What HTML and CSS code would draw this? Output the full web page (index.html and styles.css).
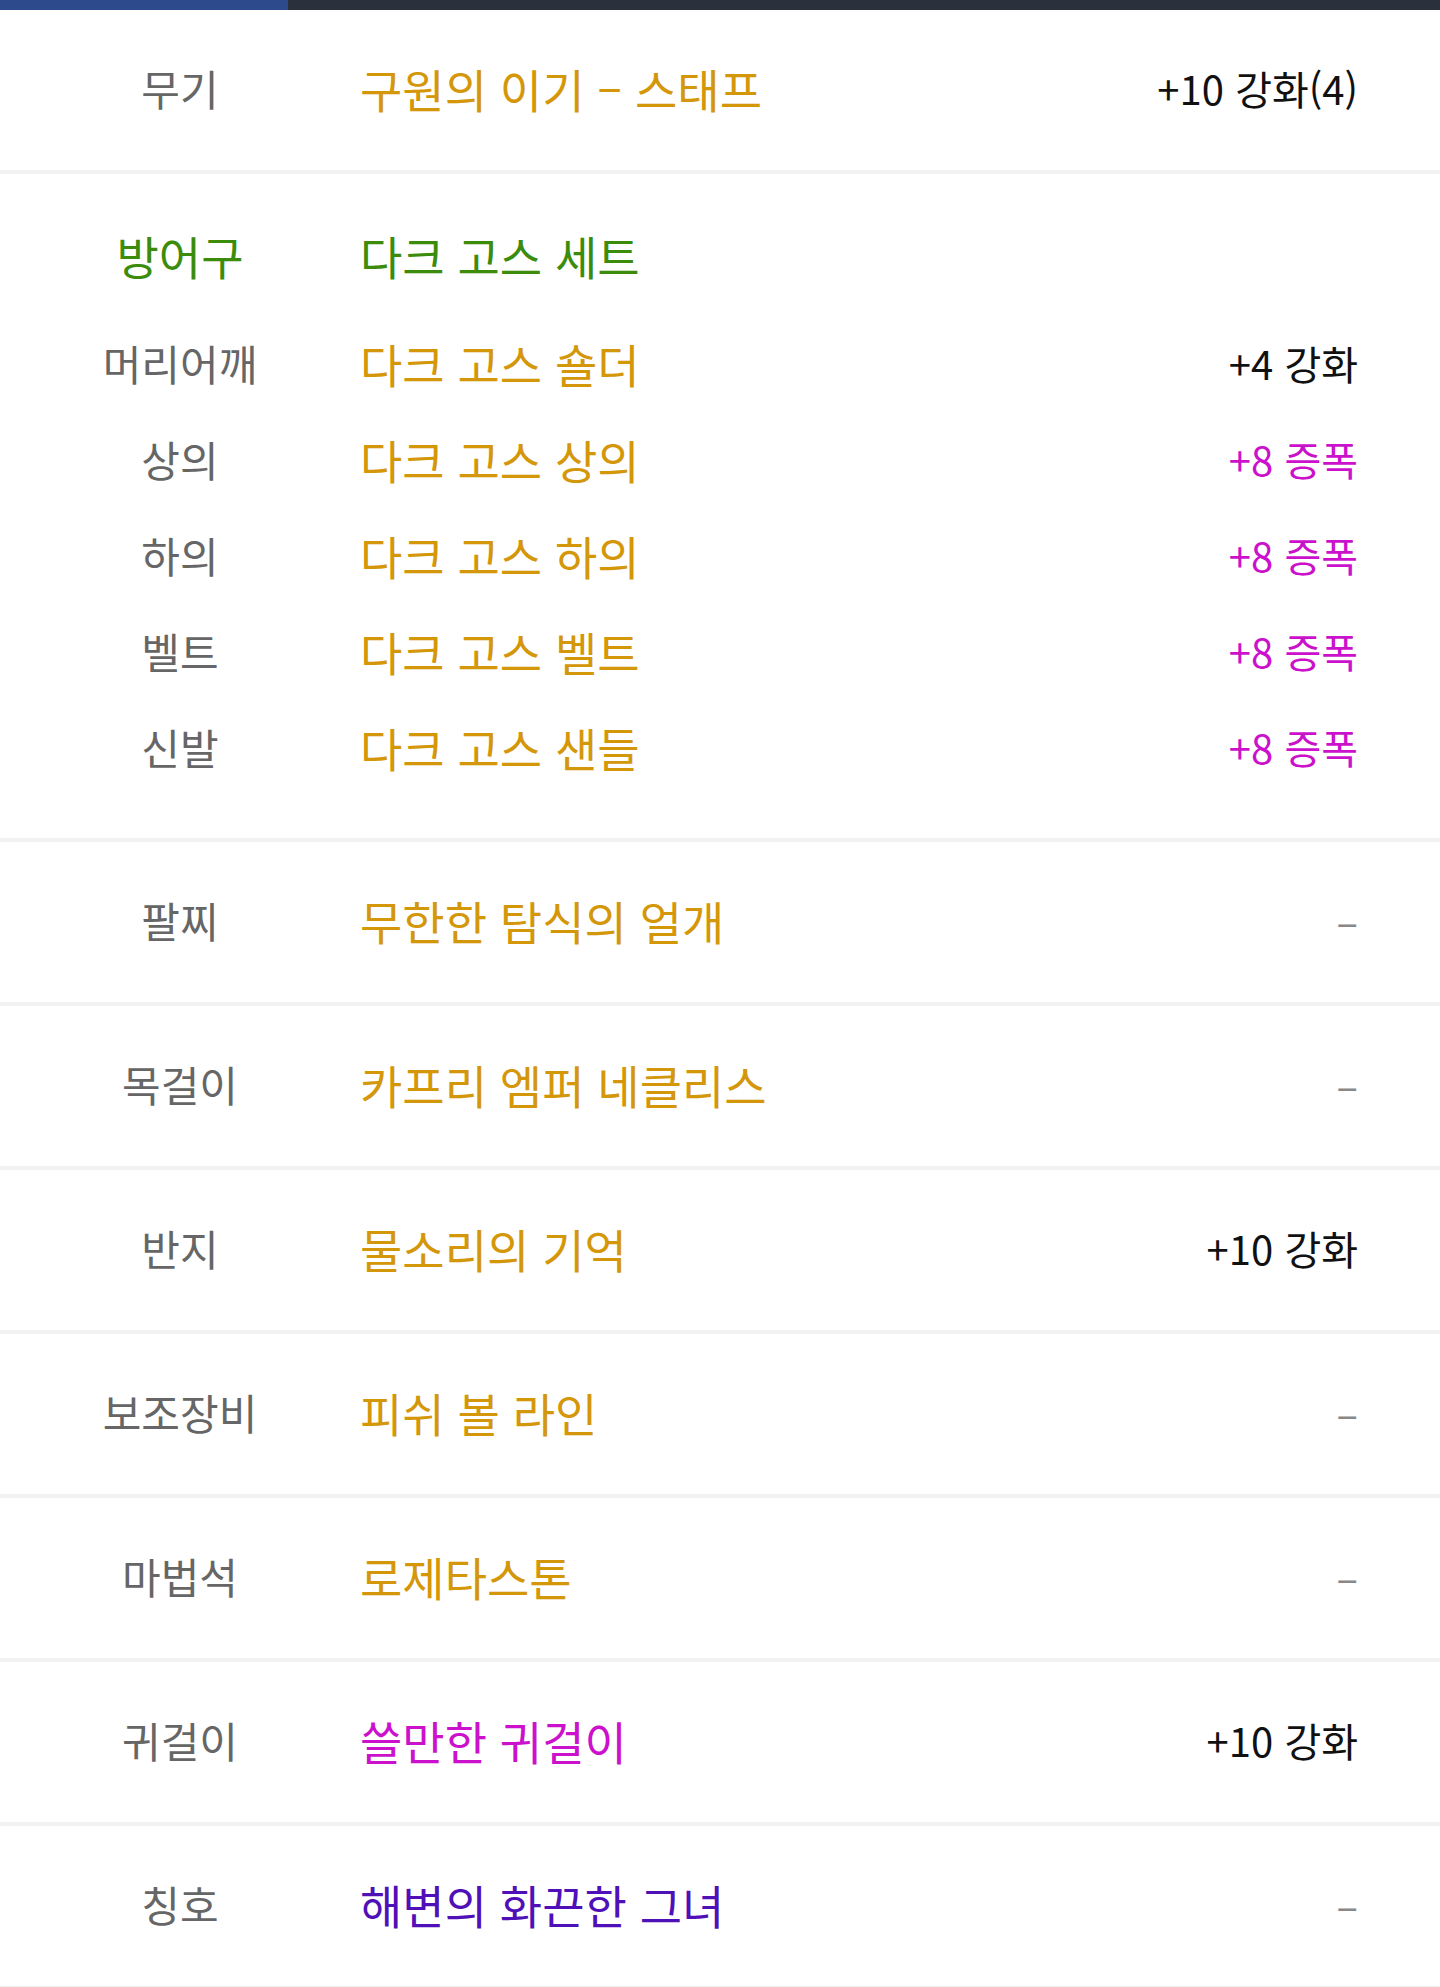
FILE: index.html
```html
<!DOCTYPE html>
<html lang="ko">
<head>
    <meta charset="UTF-8">
    <meta name="viewport" content="width=device-width, initial-scale=1.0">
    <title>장비</title>
    <link rel="stylesheet" href="styles.css">
</head>
<body>

    <div class="tabbar">
        <div class="tab-active"></div>
    </div>

    <ul class="equip-list">
        <li class="equip-row">
            <span class="slot">무기</span>
            <span class="item">구원의 이기 – 스태프</span>
            <span class="value">+10 강화(4)</span>
        </li>

        <li class="equip-group">
            <div class="group-head">
                <span class="slot">방어구</span>
                <span class="item">다크 고스 세트</span>
            </div>
            <div class="group-line">
                <span class="slot">머리어깨</span>
                <span class="item">다크 고스 숄더</span>
                <span class="value">+4 강화</span>
            </div>
            <div class="group-line">
                <span class="slot">상의</span>
                <span class="item">다크 고스 상의</span>
                <span class="value amp">+8 증폭</span>
            </div>
            <div class="group-line">
                <span class="slot">하의</span>
                <span class="item">다크 고스 하의</span>
                <span class="value amp">+8 증폭</span>
            </div>
            <div class="group-line">
                <span class="slot">벨트</span>
                <span class="item">다크 고스 벨트</span>
                <span class="value amp">+8 증폭</span>
            </div>
            <div class="group-line">
                <span class="slot">신발</span>
                <span class="item">다크 고스 샌들</span>
                <span class="value amp">+8 증폭</span>
            </div>
        </li>

        <li class="equip-row">
            <span class="slot">팔찌</span>
            <span class="item">무한한 탐식의 얼개</span>
            <span class="value none">–</span>
        </li>
        <li class="equip-row">
            <span class="slot">목걸이</span>
            <span class="item">카프리 엠퍼 네클리스</span>
            <span class="value none">–</span>
        </li>
        <li class="equip-row">
            <span class="slot">반지</span>
            <span class="item">물소리의 기억</span>
            <span class="value">+10 강화</span>
        </li>
        <li class="equip-row">
            <span class="slot">보조장비</span>
            <span class="item">피쉬 볼 라인</span>
            <span class="value none">–</span>
        </li>
        <li class="equip-row">
            <span class="slot">마법석</span>
            <span class="item">로제타스톤</span>
            <span class="value none">–</span>
        </li>
        <li class="equip-row">
            <span class="slot">귀걸이</span>
            <span class="item rare">쓸만한 귀걸이</span>
            <span class="value">+10 강화</span>
        </li>
        <li class="equip-row">
            <span class="slot">칭호</span>
            <span class="item title">해변의 화끈한 그녀</span>
            <span class="value none">–</span>
        </li>
    </ul>

</body>
</html>
```

FILE: styles.css
```css
body {
    font-family: "Noto Sans CJK KR", "Noto Sans", sans-serif;
    margin: 0;
    background-color: white;
}
.tabbar {
    height: 10px;
    background-color: #2b313c;
}
.tab-active {
    width: 288px;
    height: 100%;
    background-color: #2c4a8c;
}
.equip-list {
    list-style: none;
    margin: 0;
    padding: 0;
}
.equip-row, .group-head, .group-line {
    display: grid;
    grid-template-columns: 360px 1fr auto;
    align-items: center;
    box-sizing: border-box;
    padding: 0 82px 5px 0;
}
.equip-row {
    height: 164px;
    border-bottom: 4px solid #f2f2f2;
}
.equip-group {
    padding: 35px 0 41px;
    border-bottom: 4px solid #f2f2f2;
}
.group-head, .group-line {
    height: 96px;
}
.group-head {
    margin-bottom: 12px;
}
.slot {
    text-align: center;
    font-size: 42px;
    color: #666;
}
.item {
    font-size: 46px;
    color: #d4970a;
}
.value {
    font-size: 40px;
    color: #111;
}
.group-head .slot, .group-head .item {
    font-size: 46px;
    color: #3a8c0a;
}
.amp, .rare {
    color: #cc11cc;
}
.title {
    color: #5010b8;
}
.none {
    color: #888;
}
```
